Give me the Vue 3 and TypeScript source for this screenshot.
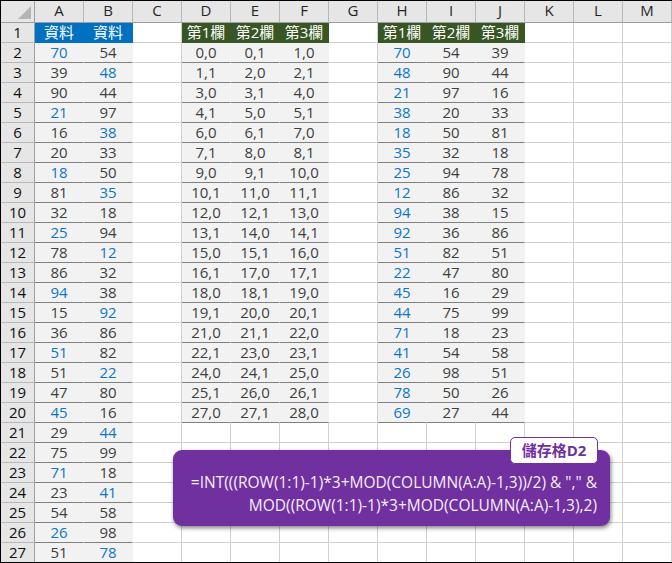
<script setup lang="ts">
const letters = 'ABCDEFGHIJKLM'.split('')
const ab: [number, number][] = [
  [70,54],[39,48],[90,44],[21,97],[16,38],[20,33],[18,50],[81,35],[32,18],[25,94],[78,12],[86,32],[94,38],
  [15,92],[36,86],[51,82],[51,22],[47,80],[45,16],[29,44],[75,99],[71,18],[23,41],[54,58],[26,98],[51,78],
]
const hj: number[][] = [
  [70,54,39],[48,90,44],[21,97,16],[38,20,33],[18,50,81],[35,32,18],[25,94,78],[12,86,32],[94,38,15],[92,36,86],
  [51,82,51],[22,47,80],[45,16,29],[44,75,99],[71,18,23],[41,54,58],[26,98,51],[78,50,26],[69,27,44],
]
interface Cell { text: string; cls: string }
function cellFor(r: number, c: number): Cell {
  // r: 0-based sheet row (0 = row 1), c: 0-based column
  if (r === 0) {
    if (c === 0 || c === 1) return { text: '資料', cls: 'hb' }
    if (c >= 3 && c <= 5) return { text: `第${c - 2}欄`, cls: 'hg' }
    if (c >= 7 && c <= 9) return { text: `第${c - 6}欄`, cls: 'hg' }
    return { text: '', cls: '' }
  }
  const i = r - 1
  if (c <= 1) {
    const blue = i % 3 === c
    return { text: String(ab[i][c]), cls: blue ? 'd blue' : 'd' }
  }
  if (i < 19 && c >= 3 && c <= 5) {
    const n = i * 3 + (c - 3)
    return { text: `${Math.floor(n / 2)},${n % 2}`, cls: 'd' }
  }
  if (i < 19 && c >= 7 && c <= 9) {
    return { text: String(hj[i][c - 7]), cls: c === 7 ? 'd blue' : 'd' }
  }
  return { text: '', cls: '' }
}
const rows = Array.from({ length: 27 }, (_, r) => ({
  n: r + 1,
  cells: letters.map((_, c) => cellFor(r, c)),
}))
</script>

<template>
  <div class="sheet">
    <div class="top">
      <div class="corner"><span class="tri"></span></div>
      <div v-for="l in letters" :key="l" class="col">{{ l }}</div>
    </div>
    <div v-for="row in rows" :key="row.n" class="row">
      <div class="rh">{{ row.n }}</div>
      <div v-for="(c, i) in row.cells" :key="i" class="cell" :class="c.cls">{{ c.text }}</div>
    </div>
    <div class="note">
      <div class="tag">儲存格D2</div>
      <div class="formula">=INT(((ROW(1:1)-1)*3+MOD(COLUMN(A:A)-1,3))/2) &amp; "," &amp;<br />MOD((ROW(1:1)-1)*3+MOD(COLUMN(A:A)-1,3),2)</div>
    </div>
  </div>
</template>

<style scoped>
.sheet {
  position: relative;
  width: 672px;
  height: 563px;
  box-sizing: border-box;
  border-left: 1px solid #000;
  border-top: 1px solid #000;
  border-bottom: 1px solid #000;
  overflow: hidden;
  background: #fff;
  font-family: "Open Sans", "Noto Sans CJK TC", sans-serif;
  font-size: 15px;
  color: #404040;
}
.top, .row { display: grid; grid-template-columns: 34px repeat(13, 49px); }
.top { height: 22px; }
.row { height: 20px; }
.corner, .col {
  box-sizing: border-box;
  background: #e6e6e6;
  border-bottom: 1px solid #9e9e9e;
  border-right: 1px solid #b8b8b8;
}
.corner { position: relative; border-right-color: #9e9e9e; }
.tri {
  position: absolute;
  right: 3px;
  bottom: 3px;
  width: 0;
  height: 0;
  border-left: 13px solid transparent;
  border-bottom: 13px solid #b4b4b4;
}
.col { text-align: center; line-height: 19px; color: #262626; }
.rh {
  box-sizing: border-box;
  background: #e6e6e6;
  border-right: 1px solid #9e9e9e;
  border-bottom: 1px solid #b8b8b8;
  text-align: center;
  line-height: 19px;
  color: #111;
}
.cell {
  box-sizing: border-box;
  border-right: 1px solid #d0d0d0;
  border-bottom: 1px solid #d0d0d0;
  text-align: center;
  line-height: 19px;
  white-space: nowrap;
  overflow: hidden;
}
.hb { background: #0070c0; color: #fff; border-color: #0070c0; border-bottom: none; }
.hg { background: #375623; color: #fff; border-color: #375623; border-bottom: none; }
.d { background: #f2f2f2; border-right-color: #f2f2f2; border-bottom-color: #808080; }
.blue { color: #0f76c6; }
.note {
  position: absolute;
  left: 172px;
  top: 449px;
  width: 437px;
  height: 76px;
  box-sizing: border-box;
  background: #70309f;
  border-radius: 9px;
  box-shadow: 1px 2px 4px rgba(0, 0, 0, 0.5);
  color: #f4eefa;
}
.tag {
  position: absolute;
  right: 12px;
  top: -13px;
  width: 88px;
  height: 27px;
  box-sizing: border-box;
  border: 1px solid #70309f;
  border-radius: 5px;
  background: #fff;
  color: #70309f;
  font-size: 15px;
  font-weight: 700;
  text-align: center;
  line-height: 25px;
}
.formula {
  padding: 21px 13px 0 0;
  text-align: right;
  font-size: 15.5px;
  line-height: 23px;
  white-space: nowrap;
}
</style>
